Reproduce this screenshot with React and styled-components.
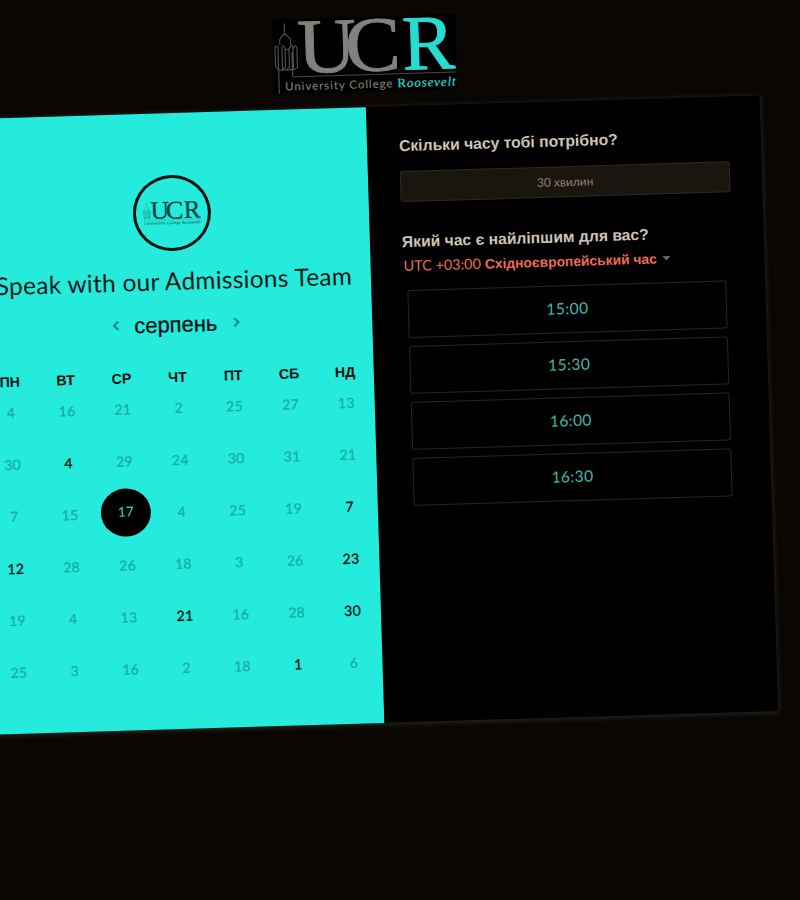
import React from 'react';
import styled, { createGlobalStyle, css } from 'styled-components';

const CYAN = '#24ebdc';

const GlobalStyle = createGlobalStyle`
  * { box-sizing: border-box; }
  html, body { margin: 0; height: 900px; overflow: hidden; background: #0a0603; }
  body { font-family: Lato, "Liberation Sans", sans-serif; }
  button { font: inherit; margin: 0; padding: 0; cursor: pointer; }
`;

const Viewport = styled.div`
  width: 800px;
  height: 900px;
  overflow: hidden;
  background: #0a0603;
`;

const Scene = styled.main`
  width: 788px;
  margin: 29px 0 0 -28px;
  transform: rotate(-1.72deg);
  transform-origin: 0 90px;
`;

const Header = styled.header`
  height: 90px;
  padding-left: 303px;
`;

const Card = styled.section`
  display: grid;
  grid-template-columns: 394px 394px;
  height: 616px;
  background: #000;
  border-radius: 3px;
  box-shadow: 0 1px 5px 1px rgba(92, 85, 75, 0.38);
`;

const CalendarPanel = styled.div`
  display: flex;
  flex-direction: column;
  align-items: center;
  padding-top: 62px;
  background: ${CYAN};
  color: #0a1a18;
`;

const Avatar = styled.div`
  display: flex;
  align-items: center;
  justify-content: center;
  width: 78px;
  height: 76px;
  border: 3px solid #03100f;
  border-radius: 50%;
`;

const Title = styled.h1`
  margin: 12.5px 0 0;
  height: 34px;
  line-height: 34px;
  font-size: 24.4px;
  font-weight: 400;
  letter-spacing: 0.3px;
  white-space: nowrap;
`;

const MonthNav = styled.div`
  display: flex;
  align-items: center;
  justify-content: space-between;
  width: 132px;
  height: 30px;
  margin: 12.5px 0 0 1px;
`;

const Month = styled.span`
  font: 400 21.9px/30px "Liberation Sans", sans-serif;
  color: #03100f;
  -webkit-text-stroke: 0.3px #03100f;
`;

const NavButton = styled.button`
  display: flex;
  width: 10px;
  height: 14px;
  margin-top: -2px;
  border: 0;
  background: none;
  color: #128f87;
`;

const Weekdays = styled.div`
  display: grid;
  grid-template-columns: repeat(7, 55.9px);
  margin: 27px 0 0 1px;
  height: 20px;
  font: 700 14.2px/20px "Liberation Sans", sans-serif;
  text-align: center;
  color: #03100f;
`;

const Days = styled.div`
  display: grid;
  grid-template-columns: repeat(7, 55.9px);
  grid-auto-rows: 52px;
  margin: -5.5px 0 0 2px;
  place-items: center;
`;

const Day = styled.button`
  width: 50px;
  height: 48px;
  border: 0;
  border-radius: 50%;
  background: none;
  font-size: 14px;
  letter-spacing: 0.3px;
  color: #18aaa1;
  ${({ $state }) => $state === 'closed' && css`
    -webkit-text-stroke: 0.2px #18aaa1;
  `}
  ${({ $state }) => $state === 'open' && css`
    color: #03100f;
    -webkit-text-stroke: 0.3px #03100f;
  `}
  ${({ $state }) => $state === 'selected' && css`
    background: #000;
    color: #45cfc0;
    font-size: 13.5px;
    margin-top: -2px;
    padding-bottom: 2px;
  `}
`;

const TimePanel = styled.div`
  padding: 30px 31px 0 32px;
`;

const Question = styled.h2`
  margin: 0;
  height: 20px;
  font: 700 15.7px/20px "Liberation Sans", sans-serif;
  color: #cfc4b4;
  white-space: nowrap;
`;

const Duration = styled.button`
  display: block;
  width: 330px;
  height: 31px;
  margin: 15px 0 30px;
  padding-bottom: 1px;
  border: 1px solid #302a21;
  border-radius: 3px;
  background: #1a150f;
  color: #8f8473;
  font-size: 12px;
`;

const Timezone = styled.button`
  display: flex;
  align-items: baseline;
  height: 20px;
  line-height: 20px;
  margin: 4px 0 14px 1px;
  border: 0;
  background: none;
  color: #ea6c58;
  font-size: 14.4px;
  white-space: nowrap;
`;

const ZoneName = styled.span`
  margin-left: 4px;
  font: 700 13.8px/20px "Liberation Sans", sans-serif;
  letter-spacing: 0.02px;
`;

const Caret = styled.span`
  align-self: center;
  margin-left: 6px;
  border: 4px solid transparent;
  border-top-color: #7c6c5d;
  border-bottom: 0;
`;

const Slots = styled.div`
  display: grid;
  gap: 8px;
  margin-left: 4px;
  width: 319px;
`;

const Slot = styled.button`
  height: 48px;
  padding-bottom: 2px;
  border: 1px solid #292620;
  border-radius: 3px;
  background: #000;
  color: #3fb9ac;
  font-size: 15.6px;
  letter-spacing: 0.4px;
`;

function Logo({ width, height, ink, accent, background }) {
  return (
    <svg width={width} height={height} viewBox="0 0 184 75" preserveAspectRatio="none" overflow="visible">
      <rect width="184" height="75" fill={background} />
      <g fill="none" stroke={ink} strokeWidth="1.1" opacity="0.65">
        <path d="M5 75V51L2 47V28Q3 25 5 28V51H9V28Q10 25 12 28V48L9 51M12 30H16V48L13 51H9M16 30Q18 25 20 28V49L17 51H13M20 31Q22 24 24 29V49L20 51H17M7 26V20L12 14V4M12 14L18 20V27M19 33V58" />
      </g>
      <path d="M19 58.3H184" stroke={ink} strokeWidth="0.8" opacity="0.7" />
      <g fontFamily="Liberation Serif, serif" fontSize="79" strokeWidth="0.9">
        <text x="24.5" y="54.5" fill={ink} stroke={ink} textLength="59" lengthAdjust="spacingAndGlyphs">U</text>
        <text x="72.5" y="54.5" fill={ink} stroke={ink} textLength="56" lengthAdjust="spacingAndGlyphs">C</text>
        <text x="130" y="54.5" fill={accent} stroke={accent}>R</text>
      </g>
      <text x="11" y="72" fontFamily="Lato, sans-serif" fontSize="11.5" textLength="108" fill={ink} stroke={ink} strokeWidth="0.1">University College</text>
      <text x="124" y="72" fontFamily="Liberation Serif, serif" fontSize="13" textLength="58.5" fill={accent} stroke={accent} strokeWidth="0.2">
        <tspan>R</tspan><tspan fontStyle="italic">oosevelt</tspan>
      </text>
    </svg>
  );
}

function Chevron({ right }) {
  return (
    <svg width="10" height="14" viewBox="0 0 10 14" fill="none" stroke="currentColor" strokeWidth="2.2">
      <path d={right ? 'M3 2.8 7.2 7 3 11.2' : 'M8 2.8 3.8 7 8 11.2'} />
    </svg>
  );
}

const weekdays = ['ПН', 'ВТ', 'СР', 'ЧТ', 'ПТ', 'СБ', 'НД'];
const days = [
  4, 16, 21, 2, 25, 27, 13,
  30, 4, 29, 24, 30, 31, 21,
  7, 15, 17, 4, 25, 19, 7,
  12, 28, 26, 18, 3, 26, 23,
  19, 4, 13, 21, 16, 28, 30,
  25, 3, 16, 2, 18, 1, 6,
];
const openDays = [8, 20, 21, 27, 31, 34, 40];
const selectedDay = 16;
const times = ['15:00', '15:30', '16:00', '16:30'];

const dayState = (i) => (i === selectedDay ? 'selected' : openDays.includes(i) ? 'open' : 'closed');

export default function App() {
  return (
    <Viewport>
      <GlobalStyle />
      <Scene>
        <Header>
          <Logo width={183} height={74} ink="#83817d" accent="#27dcd2" background="#000" />
        </Header>
        <Card>
          <CalendarPanel>
            <Avatar>
              <Logo width={58} height={24} ink="#07433f" accent="#07433f" background="none" />
            </Avatar>
            <Title>Speak with our Admissions Team</Title>
            <MonthNav>
              <NavButton aria-label="Попередній місяць"><Chevron /></NavButton>
              <Month>серпень</Month>
              <NavButton aria-label="Наступний місяць"><Chevron right /></NavButton>
            </MonthNav>
            <Weekdays>
              {weekdays.map((d) => <span key={d}>{d}</span>)}
            </Weekdays>
            <Days>
              {days.map((d, i) => <Day key={i} $state={dayState(i)}>{d}</Day>)}
            </Days>
          </CalendarPanel>
          <TimePanel>
            <Question>Скільки часу тобі потрібно?</Question>
            <Duration>30 хвилин</Duration>
            <Question>Який час є найліпшим для вас?</Question>
            <Timezone>
              UTC +03:00
              <ZoneName>Східноєвропейський час</ZoneName>
              <Caret />
            </Timezone>
            <Slots>
              {times.map((t) => <Slot key={t}>{t}</Slot>)}
            </Slots>
          </TimePanel>
        </Card>
      </Scene>
    </Viewport>
  );
}
